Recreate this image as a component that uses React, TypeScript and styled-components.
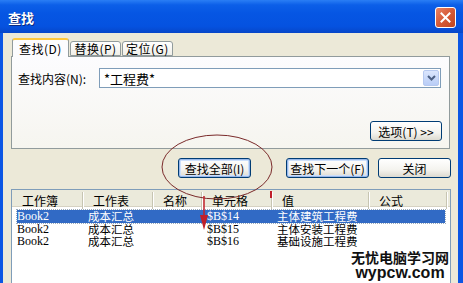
import React from "react";
import styled, { createGlobalStyle } from "styled-components";

const Global = createGlobalStyle`
  html, body { margin: 0; padding: 0; background: #0a55e0; }
  body { width: 463px; height: 283px; overflow: hidden; font-family: "Noto Sans CJK SC", "Liberation Sans", sans-serif; font-size: 12px; }
`;

const Win = styled.div`
  position: relative;
  width: 463px;
  height: 283px;
  display: flex;
  flex-direction: column;
  background: #0b56e4;
  overflow: hidden;
`;

const TitleBar = styled.div`
  height: 33px;
  flex: none;
  display: flex;
  align-items: center;
  justify-content: space-between;
  padding: 0 7px 0 8px;
  background: linear-gradient(180deg, #2a7ef5 0%, #0c5fe8 15%, #0656e3 40%, #0552e0 80%, #0646c8 100%);
`;

const Title = styled.div`
  color: #fff;
  font-weight: bold;
  font-size: 13px;
  text-shadow: 1px 1px 0 #0a2a80;
  padding-top: 2px;
`;

const CloseBtn = styled.div`
  width: 19px;
  height: 19px;
  border: 1px solid #fff;
  border-radius: 3px;
  background: linear-gradient(135deg, #e88466 0%, #d65a37 50%, #c0451f 100%);
  display: flex;
  align-items: center;
  justify-content: center;
  margin-top: 2px;
`;

const Body = styled.div`
  flex: 1;
  margin: 0 5px 0 3px;
  background: #ece9d8;
  display: flex;
  flex-direction: column;
  padding: 5px 0 0 8px;
`;

const Tabs = styled.div`
  display: flex;
  align-items: flex-end;
  height: 18px;
  position: relative;
  z-index: 1;
`;

const Tab = styled.div<{ $active?: boolean; $w: number }>`
  width: ${(p) => p.$w}px;
  box-sizing: border-box;
  height: ${(p) => (p.$active ? 19 : 15)}px;
  margin-left: ${(p) => (p.$active ? 1 : 0)}px;
  margin-right: 1px;
  display: flex;
  align-items: center;
  justify-content: center;
  letter-spacing: 0.5px;
  background: ${(p) => (p.$active ? "#fcfcfe" : "linear-gradient(#ffffff, #f0efe8)")};
  border: 1px solid #919b9c;
  border-bottom: ${(p) => (p.$active ? "none" : "1px solid #919b9c")};
  border-top: ${(p) => (p.$active ? "2px solid #ffc83c" : "1px solid #919b9c")};
  border-radius: 3px 3px 0 0;
  color: #000;
  font-size: 12px;
  margin-bottom: ${(p) => (p.$active ? -1 : 0)}px;
`;

const Panel = styled.div`
  border: 1px solid #919b9c;
  background: linear-gradient(180deg, #fcfcfe 0%, #f6f5ef 100%);
  display: flex;
  flex-direction: column;
  padding: 11px 7px 0 6px;
  box-sizing: border-box;
  width: 439px;
  height: 93px;
`;

const FieldRow = styled.div`
  display: flex;
  align-items: center;
  gap: 4px;
`;

const Label = styled.span`
  width: 77px;
  color: #000;
`;

const Combo = styled.div`
  width: 342px;
  height: 20px;
  box-sizing: border-box;
  border: 1px solid #7f9db9;
  background: #fff;
  display: flex;
  align-items: center;
  justify-content: space-between;
  padding: 0 1px 0 4px;
`;

const ComboText = styled.span`
  font-size: 13px;
  color: #000;
`;

const DropBtn = styled.div`
  width: 16px;
  height: 16px;
  border-radius: 2px;
  background: linear-gradient(180deg, #dbe6fd 0%, #b9cdf7 100%);
  border: 1px solid #b6c9f0;
  box-sizing: border-box;
  display: flex;
  align-items: center;
  justify-content: center;
`;

const OptRow = styled.div`
  display: flex;
  justify-content: flex-end;
  margin-top: 33px;
`;

const Btn = styled.div<{ $w: number; $focus?: boolean }>`
  width: ${(p) => p.$w}px;
  height: 20px;
  box-sizing: border-box;
  border: 1px solid #003c74;
  border-radius: 3px;
  background: linear-gradient(180deg, #ffffff 0%, #f4f3ee 60%, #dcdad0 100%);
  box-shadow: ${(p) => (p.$focus ? "inset 0 0 0 1px #98b8ea, inset 0 0 0 2px #cde0fb" : "none")};
  display: flex;
  align-items: center;
  justify-content: center;
  color: #000;
  font-size: 12px;
  white-space: nowrap;
`;

const ButtonRow = styled.div`
  display: flex;
  margin-top: 9px;
  padding-left: 167px;
  height: 20px;
`;

const Gap = styled.div<{ $w: number }>`
  width: ${(p) => p.$w}px;
  flex: none;
`;

const List = styled.div`
  margin-top: 11px;
  width: 440px;
  flex: 1;
  border: 1px solid #7f9db9;
  border-bottom: none;
  background: #fff;
  display: flex;
  flex-direction: column;
  box-sizing: border-box;
`;

const Header = styled.div`
  display: grid;
  grid-template-columns: 71px 70px 49px 70px 97px 78px;
  height: 16px;
  background: #ebeadb;
  border-bottom: 1px solid #d6d2c2;
`;

const HCell = styled.div`
  display: flex;
  align-items: center;
  padding-left: 10px;
  border-right: 1px solid #c7c5b2;
  box-shadow: 1px 0 0 #fff;
  color: #000;
  font-size: 12px;
  margin: 2px 0;
`;

const Rows = styled.div`
  padding-top: 3px;
  display: flex;
  flex-direction: column;
`;

const Row = styled.div<{ $sel?: boolean }>`
  display: grid;
  grid-template-columns: 71px 70px 49px 70px 97px 68px;
  height: 12.5px;
  margin: 0 5px;
  align-items: center;
  background: ${(p) => (p.$sel ? "#316ac5" : "transparent")};
  color: ${(p) => (p.$sel ? "#fff" : "#000")};
  outline: ${(p) => (p.$sel ? "1px dotted #9ab" : "none")};
  font-size: 11px;
  line-height: 12px;
`;

const Cell = styled.div<{ $mono?: boolean }>`
  height: 12px;
  font-size: ${(p) => (p.$mono ? 12 : 11.5)}px;
  line-height: 12px;
  font-family: ${(p) => (p.$mono ? '"Liberation Serif", serif' : '"Noto Sans CJK SC", sans-serif')};
  white-space: nowrap;
`;

const Overlay = styled.svg`
  position: absolute;
  left: 0;
  top: 0;
  pointer-events: none;
`;

const Watermark = styled.div`
  position: absolute;
  left: 351px;
  top: 249px;
  display: flex;
  flex-direction: column;
  align-items: center;
  font-weight: bold;
  color: #111;
  white-space: nowrap;
`;

const WmCn = styled.span`
  font-size: 14px;
  line-height: 16px;
  font-family: "Noto Sans CJK SC", sans-serif;
`;

const WmEn = styled.span`
  font-size: 16px;
  line-height: 16px;
  font-family: "Liberation Sans", sans-serif;
`;

const rows = [
  ["Book2", "成本汇总", "", "$B$14", "主体建筑工程费"],
  ["Book2", "成本汇总", "", "$B$15", "主体安装工程费"],
  ["Book2", "成本汇总", "", "$B$16", "基础设施工程费"],
];

export default function App() {
  return (
    <>
      <Global />
      <Win>
        <TitleBar>
          <Title>查找</Title>
          <CloseBtn>
            <svg width="11" height="11" viewBox="0 0 11 11">
              <path d="M1.5 1.5 L9.5 9.5 M9.5 1.5 L1.5 9.5" stroke="#fff" strokeWidth="2" strokeLinecap="square" />
            </svg>
          </CloseBtn>
        </TitleBar>
        <Body>
          <Tabs>
            <Tab $active $w={57}>查找(D)</Tab>
            <Tab $w={51}>替换(P)</Tab>
            <Tab $w={51}>定位(G)</Tab>
          </Tabs>
          <Panel>
            <FieldRow>
              <Label>查找内容(N):</Label>
              <Combo>
                <ComboText>*工程费*</ComboText>
                <DropBtn>
                  <svg width="9" height="6" viewBox="0 0 9 6">
                    <path d="M1 1 L4.5 4.5 L8 1" stroke="#4d6185" strokeWidth="2" fill="none" />
                  </svg>
                </DropBtn>
              </Combo>
            </FieldRow>
            <OptRow>
              <Btn $w={72}>选项(T) &gt;&gt;</Btn>
            </OptRow>
          </Panel>
          <ButtonRow>
            <Btn $w={73} $focus>查找全部(I)</Btn>
            <Gap $w={35} />
            <Btn $w={83} $focus>查找下一个(F)</Btn>
            <Gap $w={9} />
            <Btn $w={73}>关闭</Btn>
          </ButtonRow>
          <List>
            <Header>
              <HCell>工作簿</HCell>
              <HCell>工作表</HCell>
              <HCell>名称</HCell>
              <HCell>单元格</HCell>
              <HCell>值</HCell>
              <HCell>公式</HCell>
            </Header>
            <Rows>
              {rows.map((r, i) => (
                <Row key={i} $sel={i === 0}>
                  <Cell $mono>{r[0]}</Cell>
                  <Cell>{r[1]}</Cell>
                  <Cell>{r[2]}</Cell>
                  <Cell $mono>{r[3]}</Cell>
                  <Cell>{r[4]}</Cell>
                  <Cell></Cell>
                </Row>
              ))}
            </Rows>
          </List>
        </Body>
        <Overlay width="463" height="283" viewBox="0 0 463 283">
          <ellipse cx="217" cy="167" rx="55" ry="32" fill="none" stroke="#7a2a2a" strokeWidth="1" />
          <path d="M204 196 L204 222" stroke="#c0202a" strokeWidth="1.5" />
          <path d="M200 215 L204 230 L208 215 Z" fill="#c0202a" />
          <path d="M271 191 L271 198" stroke="#c0202a" strokeWidth="2" />
        </Overlay>
        <Watermark>
          <WmCn>无忧电脑学习网</WmCn>
          <WmEn>wypcw.com</WmEn>
        </Watermark>
      </Win>
    </>
  );
}
